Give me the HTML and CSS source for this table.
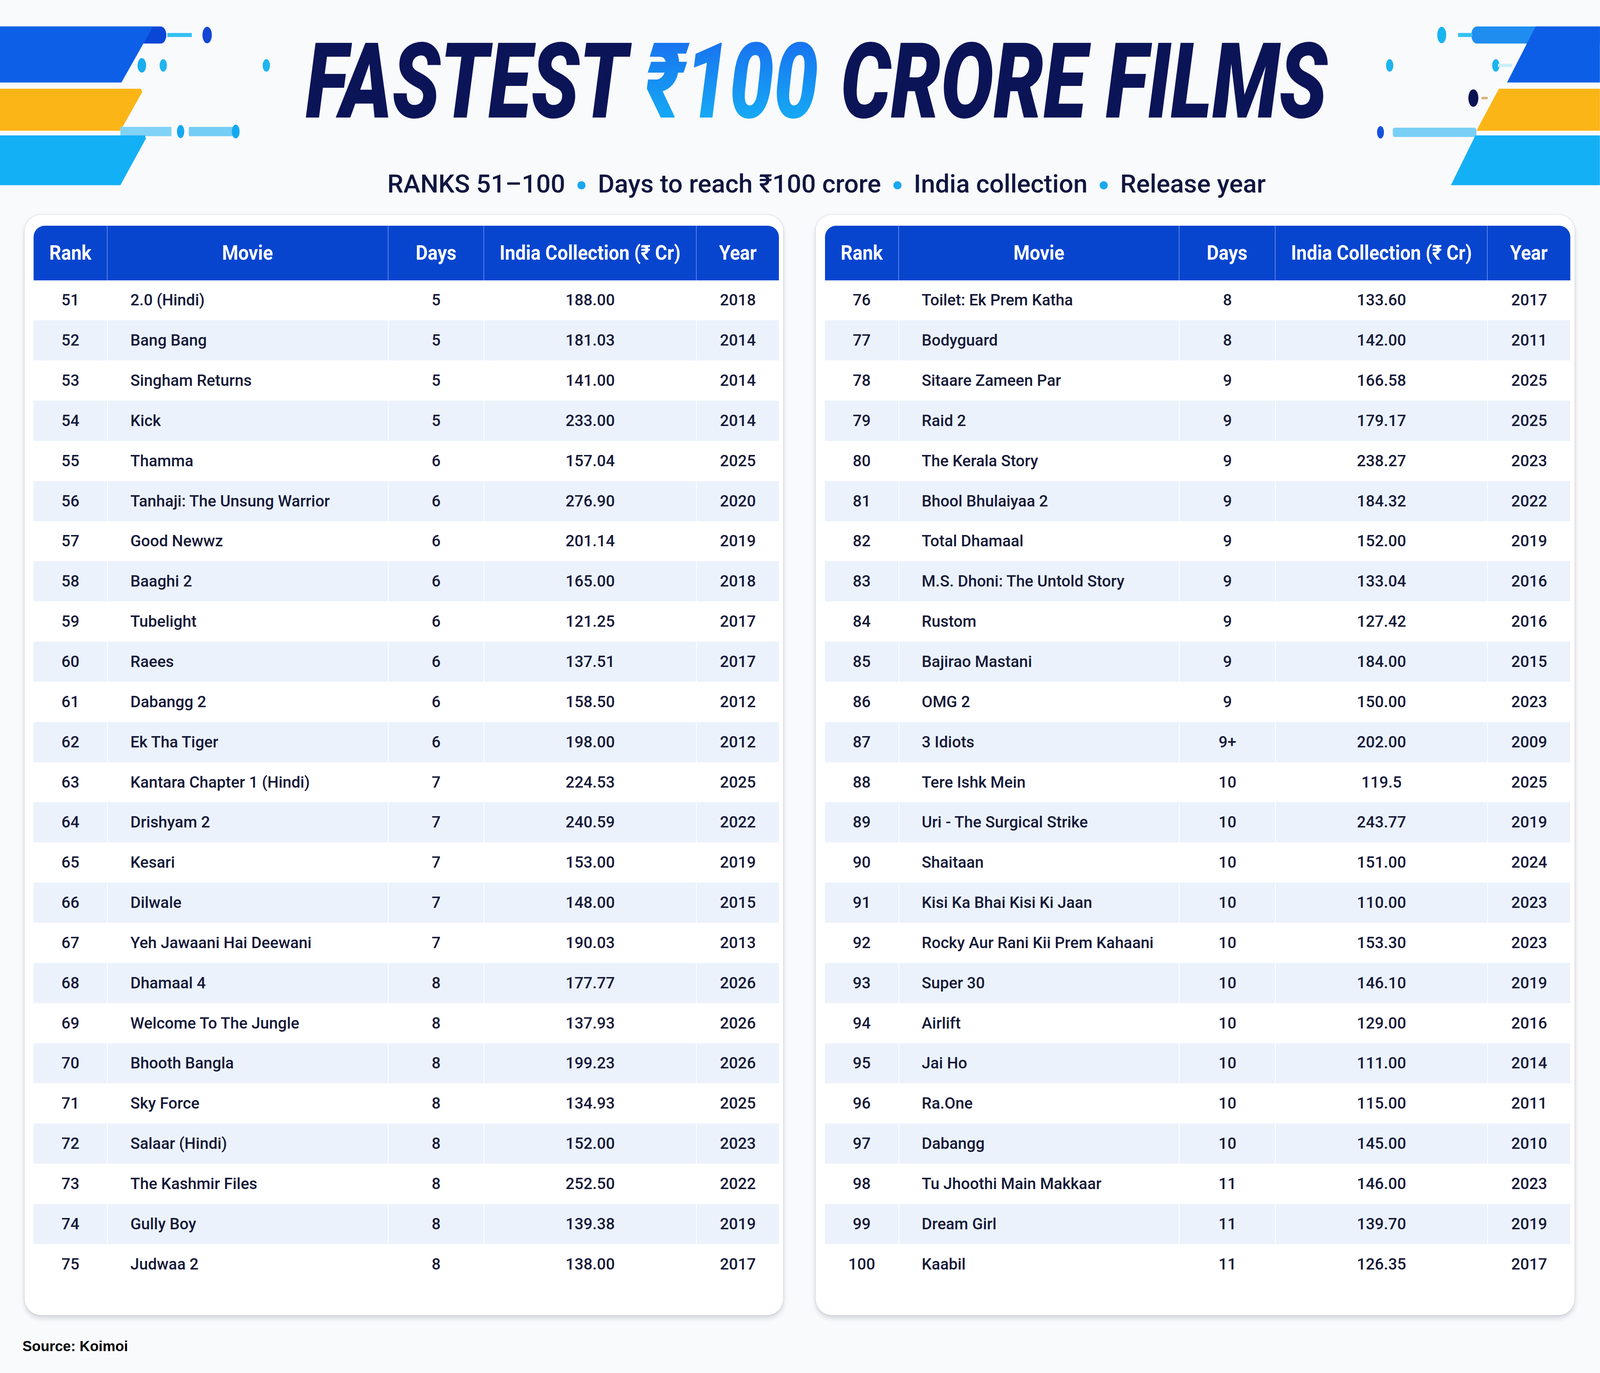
FILE: index.html
```html
<!DOCTYPE html>
<html lang="en">
<head>
<meta charset="utf-8">
<title>Fastest ₹100 Crore Films — Ranks 51–100</title>
<link rel="stylesheet" href="styles.css">
</head>
<body>
<div class="page">
  <header class="header">
    <svg class="deco deco-left" viewBox="0 0 270 135" preserveAspectRatio="none" aria-hidden="true">
      <defs>
        <linearGradient id="gl1" x1="0" x2="1" y1="0" y2="0">
          <stop offset="0" stop-color="#22b6f0"/>
          <stop offset="0.5" stop-color="#86d8f8"/>
          <stop offset="1" stop-color="#2ab8f0"/>
        </linearGradient>
        <linearGradient id="gl2" x1="0" x2="1" y1="0" y2="0">
          <stop offset="0" stop-color="#2466e6"/>
          <stop offset="0.75" stop-color="#bfe6fb"/>
          <stop offset="1" stop-color="#ffffff" stop-opacity="0"/>
        </linearGradient>
      </defs>
      <rect x="-10" y="17" width="173" height="11" rx="5.5" fill="#0a47d6"/>
      <polygon points="0,17 150,17 119,53 0,53" fill="#0e5fe7"/>
      <line x1="164" y1="22.5" x2="188" y2="22.5" stroke="#35c0f2" stroke-width="2.6"/>
      <ellipse cx="203" cy="22.5" rx="4.6" ry="5.3" fill="#1446d6"/>
      <ellipse cx="139" cy="42" rx="4.2" ry="4.6" fill="#19aeee"/>
      <line x1="160" y1="42" x2="261" y2="42" stroke="url(#gl1)" stroke-width="5" stroke-linecap="round"/>
      <ellipse cx="160" cy="42" rx="3.6" ry="4" fill="#1fb5ef"/>
      <ellipse cx="261" cy="42" rx="3.6" ry="4" fill="#1fb5ef"/>
      <polygon points="0,57 138,57 139.5,59 118,84 0,84" fill="#fbb516"/>
      <line x1="152" y1="63" x2="242" y2="63" stroke="url(#gl2)" stroke-width="3.4" stroke-linecap="round"/>
      <rect x="118" y="81.5" width="50" height="6" fill="#80d3f6"/>
      <ellipse cx="177" cy="84.5" rx="3.6" ry="4.2" fill="#16a9ef"/>
      <rect x="185" y="81.5" width="46" height="6" rx="1" fill="#74cdf4"/>
      <ellipse cx="231" cy="84.5" rx="3.8" ry="4.4" fill="#14a9ef"/>
      <polygon points="0,87 142,87 143,89 118,119 0,119" fill="#14b0f5"/>
    </svg>

    <div class="titles">
      <h1 class="title"><span class="title-inner">FASTEST <span class="rupee">₹100</span> CRORE FILMS</span></h1>
      <p class="subtitle">
        <span>RANKS 51–100</span><i class="dot"></i>
        <span>Days to reach ₹100 crore</span><i class="dot"></i>
        <span>India collection</span><i class="dot"></i>
        <span>Release year</span>
      </p>
    </div>

    <svg class="deco deco-right" viewBox="0 0 238 135" preserveAspectRatio="none" aria-hidden="true">
      <defs>
        <linearGradient id="gr1" x1="0" x2="1" y1="0" y2="0">
          <stop offset="0" stop-color="#22b6f0"/>
          <stop offset="0.5" stop-color="#86d8f8"/>
          <stop offset="1" stop-color="#2ab8f0"/>
        </linearGradient>
        <linearGradient id="gr2" x1="0" x2="1" y1="0" y2="0">
          <stop offset="0" stop-color="#ffffff" stop-opacity="0"/>
          <stop offset="0.1" stop-color="#c4ebfb"/>
          <stop offset="1" stop-color="#2b72e8"/>
        </linearGradient>
      </defs>
      <rect x="112" y="17" width="140" height="11" rx="5.5" fill="#1f8cef"/>
      <polygon points="175,17 238,17 238,53 147,53" fill="#0d5ee6"/>
      <ellipse cx="83" cy="22.5" rx="4.4" ry="5.3" fill="#18b5f0"/>
      <line x1="99" y1="22.5" x2="113" y2="22.5" stroke="#35c0f2" stroke-width="2.6"/>
      <line x1="32" y1="42" x2="136" y2="42" stroke="url(#gr1)" stroke-width="5" stroke-linecap="round"/>
      <ellipse cx="32" cy="42" rx="3.6" ry="4" fill="#1cb4ef"/>
      <ellipse cx="136" cy="42" rx="3.6" ry="4" fill="#1cb4ef"/>
      <line x1="138" y1="42" x2="152" y2="42" stroke="#c9eefb" stroke-width="2"/>
      <line x1="7" y1="63" x2="98" y2="63" stroke="url(#gr2)" stroke-width="3.4" stroke-linecap="round"/>
      <ellipse cx="114" cy="63" rx="4.9" ry="5.6" fill="#0b1452"/>
      <line x1="122" y1="63" x2="128" y2="63" stroke="#d9b27c" stroke-width="1.6"/>
      <polygon points="139,57 238,57 238,84 117,84" fill="#fbb516"/>
      <ellipse cx="23" cy="85" rx="3.4" ry="4" fill="#1552dc"/>
      <rect x="35" y="82" width="82" height="6" rx="2" fill="#79cff5"/>
      <polygon points="116,87 238,87 238,119 92,119" fill="#14b0f5"/>
    </svg>
  </header>

  <main class="tables">
    <section class="card">
      <table class="films">
        <colgroup><col class="c-rank"><col class="c-movie"><col class="c-days"><col class="c-coll"><col class="c-year"></colgroup>
        <thead>
          <tr><th><span>Rank</span></th><th><span>Movie</span></th><th><span>Days</span></th><th><span>India Collection (₹ Cr)</span></th><th><span>Year</span></th></tr>
        </thead>
        <tbody>
          <tr><td>51</td><td>2.0 (Hindi)</td><td>5</td><td>188.00</td><td>2018</td></tr>
          <tr><td>52</td><td>Bang Bang</td><td>5</td><td>181.03</td><td>2014</td></tr>
          <tr><td>53</td><td>Singham Returns</td><td>5</td><td>141.00</td><td>2014</td></tr>
          <tr><td>54</td><td>Kick</td><td>5</td><td>233.00</td><td>2014</td></tr>
          <tr><td>55</td><td>Thamma</td><td>6</td><td>157.04</td><td>2025</td></tr>
          <tr><td>56</td><td>Tanhaji: The Unsung Warrior</td><td>6</td><td>276.90</td><td>2020</td></tr>
          <tr><td>57</td><td>Good Newwz</td><td>6</td><td>201.14</td><td>2019</td></tr>
          <tr><td>58</td><td>Baaghi 2</td><td>6</td><td>165.00</td><td>2018</td></tr>
          <tr><td>59</td><td>Tubelight</td><td>6</td><td>121.25</td><td>2017</td></tr>
          <tr><td>60</td><td>Raees</td><td>6</td><td>137.51</td><td>2017</td></tr>
          <tr><td>61</td><td>Dabangg 2</td><td>6</td><td>158.50</td><td>2012</td></tr>
          <tr><td>62</td><td>Ek Tha Tiger</td><td>6</td><td>198.00</td><td>2012</td></tr>
          <tr><td>63</td><td>Kantara Chapter 1 (Hindi)</td><td>7</td><td>224.53</td><td>2025</td></tr>
          <tr><td>64</td><td>Drishyam 2</td><td>7</td><td>240.59</td><td>2022</td></tr>
          <tr><td>65</td><td>Kesari</td><td>7</td><td>153.00</td><td>2019</td></tr>
          <tr><td>66</td><td>Dilwale</td><td>7</td><td>148.00</td><td>2015</td></tr>
          <tr><td>67</td><td>Yeh Jawaani Hai Deewani</td><td>7</td><td>190.03</td><td>2013</td></tr>
          <tr><td>68</td><td>Dhamaal 4</td><td>8</td><td>177.77</td><td>2026</td></tr>
          <tr><td>69</td><td>Welcome To The Jungle</td><td>8</td><td>137.93</td><td>2026</td></tr>
          <tr><td>70</td><td>Bhooth Bangla</td><td>8</td><td>199.23</td><td>2026</td></tr>
          <tr><td>71</td><td>Sky Force</td><td>8</td><td>134.93</td><td>2025</td></tr>
          <tr><td>72</td><td>Salaar (Hindi)</td><td>8</td><td>152.00</td><td>2023</td></tr>
          <tr><td>73</td><td>The Kashmir Files</td><td>8</td><td>252.50</td><td>2022</td></tr>
          <tr><td>74</td><td>Gully Boy</td><td>8</td><td>139.38</td><td>2019</td></tr>
          <tr><td>75</td><td>Judwaa 2</td><td>8</td><td>138.00</td><td>2017</td></tr>
        </tbody>
      </table>
    </section>

    <section class="card">
      <table class="films">
        <colgroup><col class="c-rank"><col class="c-movie"><col class="c-days"><col class="c-coll"><col class="c-year"></colgroup>
        <thead>
          <tr><th><span>Rank</span></th><th><span>Movie</span></th><th><span>Days</span></th><th><span>India Collection (₹ Cr)</span></th><th><span>Year</span></th></tr>
        </thead>
        <tbody>
          <tr><td>76</td><td>Toilet: Ek Prem Katha</td><td>8</td><td>133.60</td><td>2017</td></tr>
          <tr><td>77</td><td>Bodyguard</td><td>8</td><td>142.00</td><td>2011</td></tr>
          <tr><td>78</td><td>Sitaare Zameen Par</td><td>9</td><td>166.58</td><td>2025</td></tr>
          <tr><td>79</td><td>Raid 2</td><td>9</td><td>179.17</td><td>2025</td></tr>
          <tr><td>80</td><td>The Kerala Story</td><td>9</td><td>238.27</td><td>2023</td></tr>
          <tr><td>81</td><td>Bhool Bhulaiyaa 2</td><td>9</td><td>184.32</td><td>2022</td></tr>
          <tr><td>82</td><td>Total Dhamaal</td><td>9</td><td>152.00</td><td>2019</td></tr>
          <tr><td>83</td><td>M.S. Dhoni: The Untold Story</td><td>9</td><td>133.04</td><td>2016</td></tr>
          <tr><td>84</td><td>Rustom</td><td>9</td><td>127.42</td><td>2016</td></tr>
          <tr><td>85</td><td>Bajirao Mastani</td><td>9</td><td>184.00</td><td>2015</td></tr>
          <tr><td>86</td><td>OMG 2</td><td>9</td><td>150.00</td><td>2023</td></tr>
          <tr><td>87</td><td>3 Idiots</td><td>9+</td><td>202.00</td><td>2009</td></tr>
          <tr><td>88</td><td>Tere Ishk Mein</td><td>10</td><td>119.5</td><td>2025</td></tr>
          <tr><td>89</td><td>Uri - The Surgical Strike</td><td>10</td><td>243.77</td><td>2019</td></tr>
          <tr><td>90</td><td>Shaitaan</td><td>10</td><td>151.00</td><td>2024</td></tr>
          <tr><td>91</td><td>Kisi Ka Bhai Kisi Ki Jaan</td><td>10</td><td>110.00</td><td>2023</td></tr>
          <tr><td>92</td><td>Rocky Aur Rani Kii Prem Kahaani</td><td>10</td><td>153.30</td><td>2023</td></tr>
          <tr><td>93</td><td>Super 30</td><td>10</td><td>146.10</td><td>2019</td></tr>
          <tr><td>94</td><td>Airlift</td><td>10</td><td>129.00</td><td>2016</td></tr>
          <tr><td>95</td><td>Jai Ho</td><td>10</td><td>111.00</td><td>2014</td></tr>
          <tr><td>96</td><td>Ra.One</td><td>10</td><td>115.00</td><td>2011</td></tr>
          <tr><td>97</td><td>Dabangg</td><td>10</td><td>145.00</td><td>2010</td></tr>
          <tr><td>98</td><td>Tu Jhoothi Main Makkaar</td><td>11</td><td>146.00</td><td>2023</td></tr>
          <tr><td>99</td><td>Dream Girl</td><td>11</td><td>139.70</td><td>2019</td></tr>
          <tr><td>100</td><td>Kaabil</td><td>11</td><td>126.35</td><td>2017</td></tr>
        </tbody>
      </table>
    </section>
  </main>

  <footer class="source">Source: Koimoi</footer>
</div>
</body>
</html>
```

FILE: styles.css
```css
/* Design grid: 1568 x 882 units, scaled to the window.
   --u is one horizontal unit, --v one vertical unit. */
:root {
  --u: calc(100vw / 1568);
  --v: calc(100vh / 882);
}

html, body {
  margin: 0;
  padding: 0;
  height: 100%;
  overflow: hidden;
  background: #f9fafc;
}

.page {
  width: 100vw;
  height: 100vh;
  display: flex;
  flex-direction: column;
  background: #f9fafc;
  font-family: Roboto, "Liberation Sans", sans-serif;
  color: #161a3a;
}

/* ---------- header ---------- */
.header {
  flex: none;
  display: flex;
  height: calc(var(--v) * 138);
}

.deco {
  flex: none;
  display: block;
  height: calc(var(--v) * 135);
}

.deco-left { width: calc(var(--u) * 270); }
.deco-right { width: calc(var(--u) * 238); }

.titles {
  flex: 1;
  min-width: 0;
  display: flex;
  flex-direction: column;
  align-items: center;
}

.title {
  margin: calc(var(--v) * 2) 0 0;
  height: calc(var(--v) * 101);
  font-family: Roboto, "Liberation Sans", sans-serif;
  font-style: italic;
  font-weight: 900;
  font-size: calc(var(--u) * 103);
  line-height: calc(var(--v) * 101);
  color: #0b1457;
  white-space: nowrap;
}

.title-inner {
  display: inline-block;
  margin: 0 calc(var(--u) * -166.5);
  transform: scaleX(0.7505);
  transform-origin: center;
}

.rupee {
  background: linear-gradient(180deg, #1a63ee 0%, #1690f2 50%, #16bbf6 100%);
  -webkit-background-clip: text;
  background-clip: text;
  color: transparent;
  padding-right: calc(var(--u) * 4);
}

.subtitle {
  margin: calc(var(--v) * 3) 0 0 calc(var(--u) * 20);
  height: calc(var(--v) * 24);
  display: flex;
  align-items: center;
  font-family: Roboto, "Liberation Sans", sans-serif;
  font-weight: 500;
  font-size: calc(var(--u) * 25);
  line-height: calc(var(--v) * 24);
  color: #10163f;
  white-space: nowrap;
}

.dot {
  display: inline-block;
  width: calc(var(--u) * 8);
  height: calc(var(--u) * 8);
  border-radius: 50%;
  background: #1aa8ef;
  margin: calc(var(--v) * 2) calc(var(--u) * 12) 0;
}

/* ---------- tables ---------- */
.tables {
  flex: none;
  display: flex;
  gap: calc(var(--u) * 32);
  padding: 0 calc(var(--u) * 25) 0 calc(var(--u) * 24);
}

.card {
  flex: 1;
  height: calc(var(--v) * 707);
  box-sizing: border-box;
  padding: calc(var(--v) * 7) calc(var(--u) * 4) 0 calc(var(--u) * 9);
  background: #ffffff;
  border-radius: calc(var(--u) * 16);
  box-shadow:
    0 calc(var(--v) * 2) calc(var(--u) * 5) rgba(20, 30, 60, 0.16),
    0 0 calc(var(--u) * 1.5) rgba(20, 30, 60, 0.18);
}

.films {
  width: 100%;
  table-layout: fixed;
  border-collapse: separate;
  border-spacing: 0;
}

.c-rank { width: calc(var(--u) * 72); }
.c-movie { width: calc(var(--u) * 275); }
.c-days { width: calc(var(--u) * 94); }
.c-coll { width: calc(var(--u) * 208); }
.c-year { width: auto; }

.films th {
  height: calc(var(--v) * 35);
  padding: 0;
  background: #0845cf;
  color: #ffffff;
  font-family: Roboto, "Liberation Sans", sans-serif;
  font-weight: 700;
  font-size: calc(var(--u) * 20);
  line-height: calc(var(--u) * 20);
  text-align: center;
  white-space: nowrap;
  border-left: calc(var(--u) * 0.7) solid rgba(220, 230, 255, 0.75);
}

.films th:first-child {
  border-left: none;
  border-top-left-radius: calc(var(--u) * 11);
}

.films th:last-child {
  border-top-right-radius: calc(var(--u) * 11);
}

.films th span {
  display: inline-block;
  transform: scaleX(0.91);
  transform-origin: center;
}

.films td {
  height: calc(var(--v) * 25.8);
  padding: 0;
  font-family: Roboto, "Liberation Sans", sans-serif;
  font-weight: 500;
  font-size: calc(var(--u) * 15.5);
  line-height: calc(var(--u) * 18);
  color: #171b3a;
  text-align: center;
  white-space: nowrap;
  border-left: calc(var(--u) * 1) solid rgba(255, 255, 255, 0.95);
}

.films td:first-child {
  border-left: none;
}

.films td:nth-child(2) {
  text-align: left;
  padding-left: calc(var(--u) * 22);
}

.films tbody tr:nth-child(even) td {
  background: #ebf2fc;
}

/* ---------- footer ---------- */
.source {
  flex: none;
  margin: calc(var(--v) * 13) 0 0 calc(var(--u) * 22);
  height: calc(var(--v) * 14);
  font-family: "Liberation Sans", Arial, sans-serif;
  font-weight: 700;
  font-size: calc(var(--u) * 14);
  line-height: calc(var(--v) * 14);
  color: #000000;
}
```
